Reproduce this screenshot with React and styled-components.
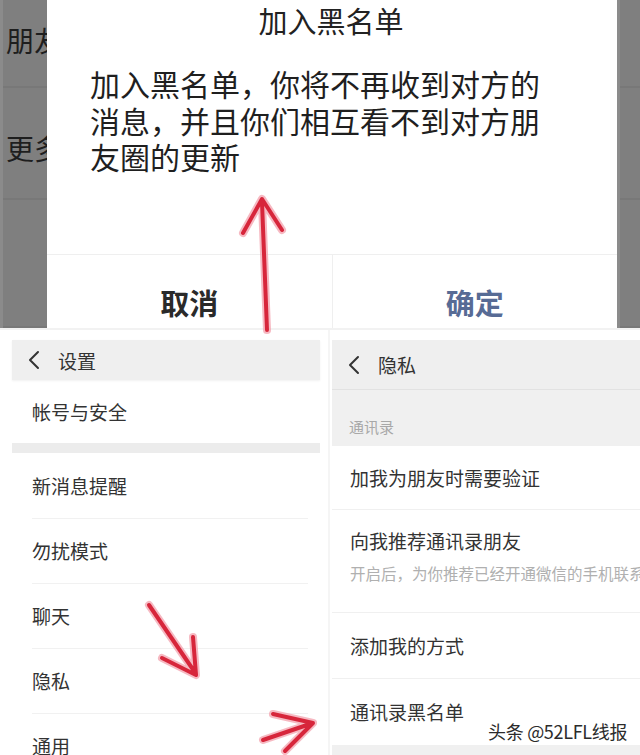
import React from "react";
import styled, { createGlobalStyle } from "styled-components";

const GlobalStyle = createGlobalStyle`
  html, body {
    margin: 0;
    padding: 0;
    background: #ffffff;
  }
  body {
    font-family: "Noto Sans CJK SC", "Noto Sans", sans-serif;
    color: #2a2a2a;
  }
`;

const settingsItems = ["新消息提醒", "勿扰模式", "聊天", "隐私", "通用"];

const Chevron = () => (
  <svg width="14" height="20" viewBox="0 0 14 20">
    <polyline
      points="11,2 3,10 11,18"
      fill="none"
      stroke="#333"
      strokeWidth="2"
      strokeLinecap="round"
      strokeLinejoin="round"
    />
  </svg>
);

// hand-drawn style arrows laid over the screenshots
const arrowPaths = [
  "M267 330 L262 202 M243 233 L262 199 L282 230",
  "M149 605 L194 671 M162 658 L196 675 L193 637",
  "M263 740 L310 724 M273 714 L313 723 L285 751",
];

const Arrows = () => (
  <ArrowLayer width="640" height="755" viewBox="0 0 640 755">
    <g
      fill="none"
      stroke="#f3a2ad"
      strokeWidth="8"
      strokeLinecap="round"
      strokeLinejoin="round"
      opacity="0.75"
    >
      {arrowPaths.map((d) => (
        <path key={d} d={d} />
      ))}
    </g>
    <g
      fill="none"
      stroke="#d7263b"
      strokeWidth="4"
      strokeLinecap="round"
      strokeLinejoin="round"
    >
      {arrowPaths.map((d) => (
        <path key={d} d={d} />
      ))}
    </g>
  </ArrowLayer>
);

const App = () => {
  return (
    <Page>
      <GlobalStyle />
      <TopShot>
        <DimStrip $width={47}>
          <DimRow $height={88} $pad={22}>朋友</DimRow>
          <DimRow $height={112} $pad={42}>更多</DimRow>
          <DimRow $height={128} />
        </DimStrip>
        <Dialog>
          <DialogBody>
            <DialogTitle>加入黑名单</DialogTitle>
            <DialogText>
              加入黑名单，你将不再收到对方的消息，并且你们相互看不到对方朋友圈的更新
            </DialogText>
          </DialogBody>
          <DialogActions>
            <ActionButton>取消</ActionButton>
            <ActionButton $primary>确定</ActionButton>
          </DialogActions>
        </Dialog>
        <DimStrip $width={23}>
          <DimRow $height={88} />
          <DimRow $height={112} />
          <DimRow $height={128} />
        </DimStrip>
      </TopShot>

      <BottomShots>
        <SettingsPanel>
          <NavBar $inset="0 8px 0 12px" $height={40}>
            <Chevron />
            <NavTitle>设置</NavTitle>
          </NavBar>
          <SettingsRow $height={63}>帐号与安全</SettingsRow>
          <GapBand />
          {settingsItems.map((item, i) => (
            <SettingsRow key={item} $height={65} $divider={i > 0}>
              {item}
            </SettingsRow>
          ))}
        </SettingsPanel>

        <PrivacyPanel>
          <NavBar $inset="0" $height={50} $line>
            <Chevron />
            <NavTitle>隐私</NavTitle>
          </NavBar>
          <SectionLabel>通讯录</SectionLabel>
          <PrivacyRow $height={63}>
            <RowTitle>加我为朋友时需要验证</RowTitle>
          </PrivacyRow>
          <PrivacyRow $height={103} $divider $top={16}>
            <RowTitle>向我推荐通讯录朋友</RowTitle>
            <RowHint>开启后，为你推荐已经开通微信的手机联系人</RowHint>
          </PrivacyRow>
          <PrivacyRow $height={66} $divider>
            <RowTitle>添加我的方式</RowTitle>
          </PrivacyRow>
          <PrivacyRow $height={67} $divider>
            <RowTitle>通讯录黑名单</RowTitle>
          </PrivacyRow>
          <BottomBand />
        </PrivacyPanel>
      </BottomShots>

      <Arrows />
      <Watermark>头条 @52LFL线报</Watermark>
    </Page>
  );
};

export default App;

const Page = styled.div`
  position: relative;
  width: 640px;
  height: 755px;
  overflow: hidden;
  background: #ffffff;
`;

const TopShot = styled.div`
  display: flex;
  height: 328px;
  border-bottom: 2px solid #f2f2f2;
`;

const DimStrip = styled.div`
  flex: 0 0 ${(p) => p.$width}px;
  background: #7f7f7f;
  overflow: hidden;
  border-left: 3px solid #8b8b8b;
  box-sizing: border-box;
`;

const DimRow = styled.div`
  height: ${(p) => p.$height}px;
  box-sizing: border-box;
  border-bottom: 2px solid #787878;
  padding: ${(p) => p.$pad || 0}px 0 0 3px;
  font-size: 28px;
  line-height: 36px;
  color: #1e1e1e;
  white-space: nowrap;
`;

const Dialog = styled.div`
  flex: 1;
  display: flex;
  flex-direction: column;
  background: #ffffff;
`;

const DialogBody = styled.div`
  height: 255px;
  box-sizing: border-box;
  border-bottom: 1px solid #efefef;
  padding: 0 50px 0 43px;
`;

const DialogTitle = styled.div`
  text-align: center;
  font-size: 29px;
  line-height: 36px;
  padding-top: 2px;
  padding-left: 5px;
  color: #222;
`;

const DialogText = styled.div`
  margin-top: 27px;
  width: 465px;
  font-size: 30px;
  line-height: 36.5px;
  color: #1f1f1f;
`;

const DialogActions = styled.div`
  flex: 1;
  display: flex;
`;

const ActionButton = styled.div`
  flex: 1;
  display: flex;
  justify-content: center;
  padding-top: 27px;
  font-size: 29px;
  line-height: 40px;
  font-weight: 700;
  color: ${(p) => (p.$primary ? "#576b95" : "#2a2a2a")};
  border-left: ${(p) => (p.$primary ? "1px solid #efefef" : "none")};
`;

const BottomShots = styled.div`
  display: grid;
  grid-template-columns: 330px 310px;
`;

const SettingsPanel = styled.div`
  padding-top: 10px;
  display: flex;
  flex-direction: column;
  border-right: 2px solid #f5f5f5;
`;

const PrivacyPanel = styled.div`
  padding-top: 10px;
  padding-left: 2px;
  display: flex;
  flex-direction: column;
`;

const NavBar = styled.div`
  display: flex;
  align-items: center;
  gap: 17px;
  height: ${(p) => p.$height}px;
  margin: ${(p) => p.$inset};
  padding-left: 15px;
  background: #efefef;
  box-sizing: border-box;
  border-bottom: ${(p) => (p.$line ? "1px solid #e2e2e2" : "none")};
  box-shadow: ${(p) => (p.$line ? "none" : "0 1px 2px rgba(0,0,0,0.06)")};
`;

const NavTitle = styled.span`
  font-size: 19px;
  color: #333;
`;

const SettingsRow = styled.div`
  height: ${(p) => p.$height}px;
  box-sizing: border-box;
  display: flex;
  align-items: center;
  padding-left: 32px;
  font-size: 19px;
  color: #333;
  position: relative;
  &::before {
    content: "";
    display: ${(p) => (p.$divider ? "block" : "none")};
    position: absolute;
    top: 0;
    left: 32px;
    right: 20px;
    border-top: 1px solid #f1f1f1;
  }
`;

const GapBand = styled.div`
  height: 10px;
  margin: 0 8px 0 12px;
  background: #ececec;
`;

const SectionLabel = styled.div`
  height: 56px;
  box-sizing: border-box;
  padding: 27px 0 0 17px;
  background: #f0f0f0;
  font-size: 15px;
  line-height: 20px;
  color: #a8a8a8;
`;

const PrivacyRow = styled.div`
  height: ${(p) => p.$height}px;
  box-sizing: border-box;
  display: flex;
  flex-direction: column;
  justify-content: ${(p) => (p.$top ? "flex-start" : "center")};
  padding: ${(p) => (p.$top ? `${p.$top}px 0 0 18px` : "0 0 0 18px")};
  border-top: ${(p) => (p.$divider ? "1px solid #f0f0f0" : "none")};
  white-space: nowrap;
  overflow: hidden;
`;

const RowTitle = styled.div`
  font-size: 19px;
  line-height: 30px;
  color: #333;
`;

const RowHint = styled.div`
  margin-top: 7px;
  font-size: 15.5px;
  line-height: 20px;
  color: #b0b0b0;
`;

const BottomBand = styled.div`
  flex: 1;
  background: #f0f0f0;
`;

const ArrowLayer = styled.svg`
  position: absolute;
  top: 0;
  left: 0;
  pointer-events: none;
`;

const Watermark = styled.div`
  position: absolute;
  left: 488px;
  top: 719px;
  font-size: 18px;
  line-height: 24px;
  color: #2b2b2b;
  letter-spacing: -0.3px;
  text-shadow: 0 0 3px #fff, 0 0 3px #fff, 0 0 2px #fff;
  white-space: nowrap;
`;
